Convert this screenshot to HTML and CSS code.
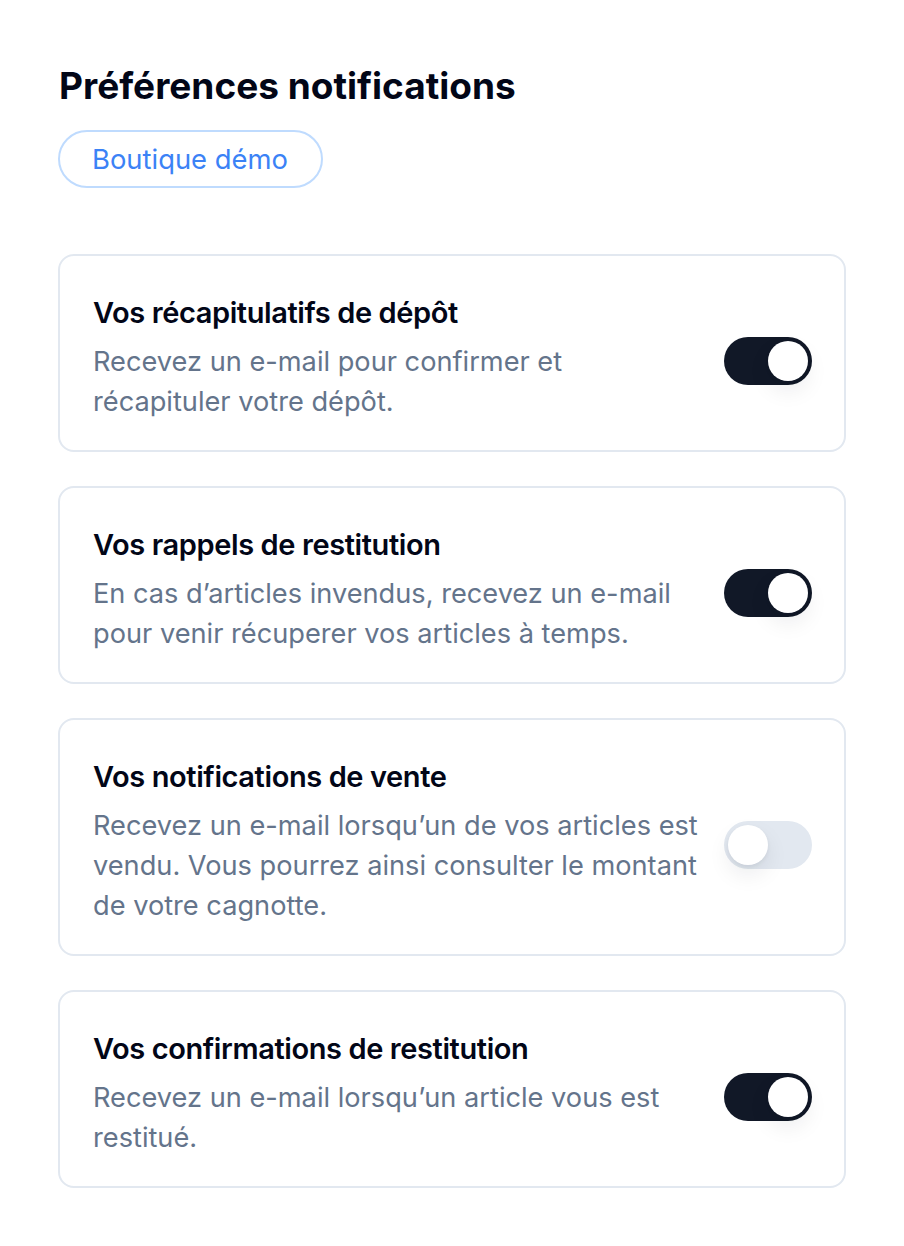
FILE: index.html
```html
<!DOCTYPE html>
<html lang="fr">
<head>
<meta charset="utf-8">
<title>Préférences notifications</title>
<link rel="stylesheet" href="styles.css">
</head>
<body>
<main class="page">
  <h1 class="page-title">Préférences notifications</h1>
  <div class="shop-row"><span class="shop-pill">Boutique démo</span></div>
  <section class="cards">
    <div class="card">
      <div class="card-text">
        <h2 class="card-title">Vos récapitulatifs de dépôt</h2>
        <p class="card-desc">Recevez un e-mail pour confirmer et récapituler votre dépôt.</p>
      </div>
      <span class="toggle on"><span class="knob"></span></span>
    </div>
    <div class="card">
      <div class="card-text">
        <h2 class="card-title">Vos rappels de restitution</h2>
        <p class="card-desc">En cas d’articles invendus, recevez un e-mail pour venir récuperer vos articles à temps.</p>
      </div>
      <span class="toggle on"><span class="knob"></span></span>
    </div>
    <div class="card">
      <div class="card-text">
        <h2 class="card-title">Vos notifications de vente</h2>
        <p class="card-desc">Recevez un e-mail lorsqu’un de vos articles est vendu. Vous pourrez ainsi consulter le montant de votre cagnotte.</p>
      </div>
      <span class="toggle off"><span class="knob"></span></span>
    </div>
    <div class="card">
      <div class="card-text">
        <h2 class="card-title">Vos confirmations de restitution</h2>
        <p class="card-desc">Recevez un e-mail lorsqu’un article vous est restitué.</p>
      </div>
      <span class="toggle on"><span class="knob"></span></span>
    </div>
  </section>
</main>
</body>
</html>
```

FILE: styles.css
```css
* { box-sizing: border-box; }
html, body { margin: 0; padding: 0; background: #ffffff; }
body {
  font-family: Inter, "Noto Sans", "DejaVu Sans", sans-serif;
  color: #020617;
}
.page {
  padding: 64px 58px 40px 58px;
}
.page-title {
  margin: 0;
  padding-left: 1px;
  font-size: 37px;
  line-height: 44px;
  font-weight: 700;
  color: #020617;
}
.shop-row {
  display: flex;
  margin-top: 22px;
}
.shop-pill {
  display: inline-flex;
  align-items: center;
  height: 58px;
  padding: 0 33px 0 32px;
  border: 2px solid #bfdbfe;
  border-radius: 29px;
  font-size: 27.4px;
  color: #3b82f6;
  font-weight: 400;
}
.cards {
  margin-top: 66px;
  display: flex;
  flex-direction: column;
  gap: 34px;
}
.card {
  display: flex;
  align-items: center;
  gap: 20px;
  border: 2px solid #e2e8f0;
  border-radius: 16px;
  padding: 34px 32px 28px 33px;
}
.card-text { flex: 1; min-width: 0; }
.card-title {
  margin: 0;
  font-size: 29px;
  line-height: 45px;
  font-weight: 600;
  letter-spacing: -0.4px;
  color: #020617;
}
.card-desc {
  margin: 7px 0 0 0;
  font-size: 27.2px;
  line-height: 40px;
  color: #64748b;
}
.toggle {
  flex: none;
  width: 88px;
  height: 48px;
  border-radius: 24px;
  margin-top: 9px;
  display: flex;
  align-items: center;
  padding: 4px;
}
.toggle.on { background: #111827; justify-content: flex-end; }
.toggle.off { background: #e2e8f0; justify-content: flex-start; }
.knob {
  width: 40px;
  height: 40px;
  border-radius: 50%;
  background: #ffffff;
  box-shadow: 0 10px 22px rgba(15, 23, 42, 0.08), 0 2px 4px rgba(15, 23, 42, 0.06);
}
```
